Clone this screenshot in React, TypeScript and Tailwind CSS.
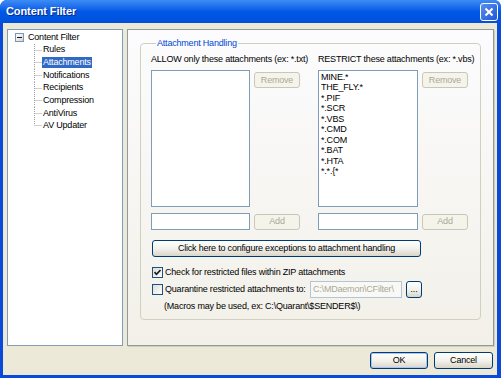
import React from "react";

const font = "font-['Liberation_Sans',Arial,sans-serif]";

const btnOn =
  "flex items-center justify-center rounded-[3px] border border-[#003C74] bg-linear-to-b from-white via-[#f3f2ec] to-[#d9d5c9] text-black";
const btnOff =
  "flex items-center justify-center rounded-[3px] border border-[#C9C7BA] bg-[#F5F4EA] text-[#ACA899]";

function MinusBox() {
  return (
    <div className="w-[9px] h-[9px] border border-[#7898B5] bg-linear-to-br from-white to-[#d8d6cc] flex items-center justify-center">
      <div className="w-[5px] h-[1px] bg-[#1a1a1a]" />
    </div>
  );
}

function Connector({ last }: { last: boolean }) {
  return (
    <svg width="8" height="12.65" className="shrink-0">
      <line x1="0.5" y1="0" x2="0.5" y2={last ? 6.3 : 12.65} stroke="#a0a0a0" strokeDasharray="1 1" />
      <line x1="0.5" y1="6.5" x2="8" y2="6.5" stroke="#a0a0a0" strokeDasharray="1 1" />
    </svg>
  );
}

function CheckBox({ checked }: { checked: boolean }) {
  return (
    <div className="w-[11px] h-[11px] shrink-0 border border-[#1C5180] bg-linear-to-br from-[#dcdcd7] to-white flex items-center justify-center">
      {checked && (
        <svg width="9" height="9" viewBox="0 0 9 9">
          <path d="M1.5 4.2 L3.5 6.3 L7.5 2" fill="none" stroke="#1d1d1d" strokeWidth="1.7" />
        </svg>
      )}
    </div>
  );
}

const treeChildren = ["Rules", "Attachments", "Notifications", "Recipients", "Compression", "AntiVirus", "AV Updater"];
const restricted = ["MINE.*", "THE_FLY.*", "*.PIF", "*.SCR", "*.VBS", "*.CMD", "*.COM", "*.BAT", "*.HTA", "*.*.{*"];

export default function App() {
  return (
    <div className={`${font} text-[9px] leading-[11px] tracking-[-0.2px] text-black w-[501px] h-[378px] flex flex-col rounded-t-[7px] bg-[#0a4ada] overflow-hidden`}>
      {/* Title bar */}
      <div className="h-[23px] shrink-0 flex items-center justify-between pl-[6px] pr-[3px] bg-linear-to-b from-[#3d8cf5] via-[#0058e6] to-[#0050dc]">
        <span className="text-white font-bold text-[11px] tracking-[-0.1px] [text-shadow:1px_1px_0_#0a2a8f]">Content Filter</span>
        <div className="w-[18px] h-[18px] rounded-[3px] border border-white bg-linear-to-br from-[#5b8ff0] to-[#1f55d6] flex items-center justify-center">
          <svg width="10" height="10" viewBox="0 0 10 10">
            <path d="M1.5 1.5 L8.5 8.5 M8.5 1.5 L1.5 8.5" stroke="white" strokeWidth="2" />
          </svg>
        </div>
      </div>

      {/* Body */}
      <div className="flex-1 ml-[3px] mr-[4px] mb-[3px] bg-[#ECE9D8] flex flex-col pt-[6px] pl-[4px] pr-[3px] pb-[6px]">
        <div className="flex gap-[4px] h-[317px]">
          {/* Tree */}
          <div className="w-[116px] bg-white border border-[#7F9DB9] pt-[1px]">
            <div className="flex items-center h-[12.65px] pl-[7px]">
              <MinusBox />
              <span className="ml-[4px]">Content Filter</span>
            </div>
            {treeChildren.map((c, i) => (
              <div key={c} className="flex items-center h-[12.65px] pl-[26px]">
                <Connector last={i === treeChildren.length - 1} />
                <span className={`px-[1px] leading-[11px] ${c === "Attachments" ? "bg-[#316AC5] text-white" : ""}`}>{c}</span>
              </div>
            ))}
          </div>

          {/* Right panel */}
          <div className="flex-1 border border-[#919B9C] bg-linear-to-b from-[#fcfcfe] to-[#f2f0e8] shadow-[1px_1px_0_#d0cdbf] pt-[8px] px-[12px]">
            <fieldset className="h-[282px] border border-[#D0D0BF] rounded-[4px] pl-[10px]">
              <legend className="ml-[5px] px-[1px] text-[#0046D5] leading-[11px]">Attachment Handling</legend>
              <div className="pt-[5px] flex gap-[18px]">
                {/* ALLOW column */}
                <div className="w-[149px] flex flex-col">
                  <div className="h-[11px] mb-[5px] whitespace-nowrap">ALLOW only these attachments (ex: *.txt)</div>
                  <div className="flex items-start gap-[4px]">
                    <div className="w-[99px] h-[137px] bg-white border border-[#7F9DB9]" />
                    <div className={`${btnOff} w-[46px] h-[16px] mt-[2px]`}>Remove</div>
                  </div>
                  <div className="flex items-center gap-[4px] mt-[6px]">
                    <div className="w-[99px] h-[17px] bg-white border border-[#7F9DB9]" />
                    <div className={`${btnOff} w-[46px] h-[16px]`}>Add</div>
                  </div>
                </div>
                {/* RESTRICT column */}
                <div className="w-[150px] flex flex-col">
                  <div className="h-[11px] mb-[5px] whitespace-nowrap">RESTRICT these attachments (ex: *.vbs)</div>
                  <div className="flex items-start gap-[4px]">
                    <div className="w-[100px] h-[137px] bg-white border border-[#7F9DB9] pt-[0.5px] pl-[2px]">
                      {restricted.map((r) => (
                        <div key={r} className="h-[10.5px] leading-[10.5px]">{r}</div>
                      ))}
                    </div>
                    <div className={`${btnOff} w-[46px] h-[16px] mt-[2px]`}>Remove</div>
                  </div>
                  <div className="flex items-center gap-[4px] mt-[6px]">
                    <div className="w-[100px] h-[17px] bg-white border border-[#7F9DB9]" />
                    <div className={`${btnOff} w-[46px] h-[16px]`}>Add</div>
                  </div>
                </div>
              </div>

              <div className={`${btnOn} ml-[1px] mt-[10px] w-[269px] h-[17px]`}>
                Click here to configure exceptions to attachment handling
              </div>

              <div className="flex items-center ml-[1px] mt-[9px] h-[13px]">
                <CheckBox checked />
                <span className="ml-[2px]">Check for restricted files within ZIP attachments</span>
              </div>
              <div className="flex items-center ml-[1px] mt-[2px] h-[17px]">
                <CheckBox checked={false} />
                <span className="ml-[2px] w-[145px] whitespace-nowrap">Quarantine restricted attachments to:</span>
                <div className="w-[92px] h-[17px] border border-[#b4c3d6] bg-[#f8f8f4] text-[#ACA899] flex items-center pl-[2px] whitespace-nowrap overflow-hidden">
                  C:\MDaemon\CFilter\
                </div>
                <div className={`${btnOn} ml-[4px] w-[16px] h-[17px]`}>...</div>
              </div>
              <div className="ml-[13px] mt-[3px]">(Macros may be used, ex: C:\Quarant\$SENDER$\)</div>
            </fieldset>
          </div>
        </div>

        {/* Bottom buttons */}
        <div className="flex justify-end gap-[6px] mt-[6px] mr-[1px]">
          <div className={`${btnOn} w-[58px] h-[17px] shadow-[inset_0_0_0_1px_#a9c4f5]`}>OK</div>
          <div className={`${btnOn} w-[59px] h-[17px]`}>Cancel</div>
        </div>
      </div>
    </div>
  );
}
